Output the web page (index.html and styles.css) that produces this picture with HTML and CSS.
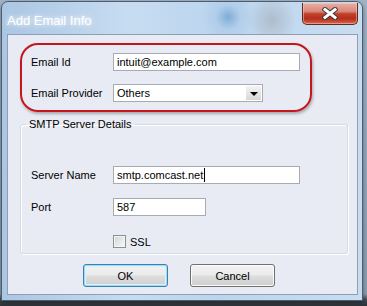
FILE: index.html
```html
<!DOCTYPE html>
<html lang="en">

<head>
    <meta charset="UTF-8">
    <meta name="viewport" content="width=device-width, initial-scale=1.0">
    <title>Add Email Info</title>
    <link rel="stylesheet" href="styles.css">
</head>

<body>
    <div class="window">
        <div class="titlebar">
            <span class="title">Add Email Info</span>
            <div class="close">
                <svg width="16" height="13" viewBox="0 0 16 13">
                    <line x1="3" y1="2.5" x2="13" y2="10.5" stroke="#3b3b3b" stroke-width="5" stroke-linecap="square" />
                    <line x1="13" y1="2.5" x2="3" y2="10.5" stroke="#3b3b3b" stroke-width="5" stroke-linecap="square" />
                    <line x1="3" y1="2.5" x2="13" y2="10.5" stroke="#fff" stroke-width="3" stroke-linecap="square" />
                    <line x1="13" y1="2.5" x2="3" y2="10.5" stroke="#fff" stroke-width="3" stroke-linecap="square" />
                </svg>
            </div>
        </div>

        <div class="client">
            <!-- обведено красным -->
            <div class="highlight">
                <div class="row">
                    <span class="label">Email Id</span>
                    <div class="field email">intuit@example.com</div>
                </div>
                <div class="row row-gap">
                    <span class="label">Email Provider</span>
                    <div class="field select">
                        <span class="select-value">Others</span>
                        <span class="select-arrow"></span>
                    </div>
                </div>
            </div>

            <fieldset class="group">
                <legend>SMTP Server Details</legend>
                <div class="row">
                    <span class="label">Server Name</span>
                    <div class="field server">smtp.comcast.net<span class="caret"></span></div>
                </div>
                <div class="row row-gap">
                    <span class="label">Port</span>
                    <div class="field port">587</div>
                </div>
                <div class="row ssl-row">
                    <span class="label"></span>
                    <span class="checkbox"></span>
                    <span class="ssl-text">SSL</span>
                </div>
            </fieldset>

            <div class="buttons">
                <div class="btn btn-default">OK</div>
                <div class="btn">Cancel</div>
            </div>
        </div>
    </div>
</body>

</html>
```

FILE: styles.css
```css
body {
    margin: 0;
    width: 367px;
    height: 306px;
    overflow: hidden;
    font-family: "Liberation Sans", Arial, sans-serif;
    font-size: 11px;
    color: #000;
    background: linear-gradient(to bottom, #9fb3c8 0%, #8a9db1 96%, #3f4750 98%, #2e343b 100%);
}

.window {
    margin: 1px 0 0 1px;
    width: 362px;
    height: 300px;
    box-sizing: border-box;
    border: 1px solid #4f5d6b;
    border-radius: 7px 7px 0 0;
    padding: 0 4px 0 5px;
    background:
        radial-gradient(circle at 226px 15px, #7eaed6 0, #b0cdea 12px, rgba(185, 210, 236, 0) 26px),
        radial-gradient(ellipse at 270px 18px, #aebdcc 0, rgba(190, 210, 230, 0) 24px),
        linear-gradient(to right, #abc6e3 0%, #c6dcf1 35%, #bcd5ee 60%, #c9ddf0 100%);
    box-shadow: 0 2px 4px rgba(0, 0, 0, 0.4);
}

.titlebar {
    display: flex;
    align-items: flex-start;
    height: 32px;
}

.title {
    padding-top: 11px;
    font-size: 13px;
    color: #fff;
    text-shadow: 0 0 4px rgba(255, 255, 255, 0.9), 0 0 8px rgba(255, 255, 255, 0.6);
}

.close {
    margin-left: auto;
    margin-top: 1px;
    width: 56px;
    height: 22px;
    box-sizing: border-box;
    border: 1px solid #5d2b24;
    border-top: none;
    border-radius: 0 0 5px 5px;
    background: linear-gradient(to bottom, #e9b0a3 0%, #d9887a 40%, #c0402c 52%, #b52f1b 75%, #d8674c 100%);
    box-shadow: inset 0 0 0 1px rgba(255, 220, 210, 0.45);
    display: flex;
    align-items: center;
    justify-content: center;
}

.client {
    height: 261px;
    box-sizing: border-box;
    border: 1px solid #8d9fb4;
    background-color: #e8ebf3;
    padding-top: 8px;
}

.highlight {
    margin-left: 12px;
    width: 292px;
    height: 69px;
    box-sizing: border-box;
    border: 2px solid #c4161c;
    border-radius: 18px;
    padding: 8px 0 0 9px;
    box-shadow: 1px 2px 3px rgba(0, 0, 0, 0.28);
}

.row {
    display: flex;
    align-items: center;
    height: 18px;
}

.row-gap {
    margin-top: 14px;
}

.highlight .row-gap {
    margin-top: 13px;
}

.label {
    width: 82px;
    flex-shrink: 0;
}

.field {
    height: 18px;
    box-sizing: border-box;
    border: 1px solid #a7acb3;
    background-color: #fff;
    padding-left: 3px;
    line-height: 16px;
    display: flex;
    align-items: center;
}

.email,
.server {
    width: 187px;
}

.port {
    width: 93px;
}

.select {
    width: 150px;
    padding-right: 1px;
}

.select-value {
    flex: 1;
}

.select-arrow {
    width: 15px;
    height: 14px;
    background: linear-gradient(to bottom, #f4f4f4 0%, #e6e6e6 50%, #d6d6d6 100%);
    display: flex;
    align-items: center;
    justify-content: center;
}

.select-arrow::after {
    content: "";
    border-left: 4px solid transparent;
    border-right: 4px solid transparent;
    border-top: 4px solid #000;
    margin-top: 1px;
}

.caret {
    width: 1px;
    height: 14px;
    margin-left: 1px;
    background-color: #000;
}

.group {
    margin: 5px 0 0 12px;
    width: 328px;
    box-sizing: border-box;
    padding: 35px 0 5px 10px;
    border: 1px solid #d4dbe3;
    border-radius: 3px;
    box-shadow: inset 1px 1px 0 #fff, 1px 1px 0 #fff;
    min-width: 0;
}

.group legend {
    margin-left: -5px;
    padding: 0 3px;
    line-height: 14px;
    font-size: 11px;
}

.ssl-row {
    margin-top: 19px;
    height: 13px;
}

.checkbox {
    width: 13px;
    height: 13px;
    box-sizing: border-box;
    border: 1px solid #8e8f8f;
    background: linear-gradient(135deg, #cfd1d4 0%, #e6e7e9 50%, #f7f7f8 100%);
    box-shadow: inset 0 0 0 1px #f4f4f4;
}

.ssl-text {
    margin-left: 4px;
}

.buttons {
    display: flex;
    gap: 22px;
    margin-top: 10px;
    padding-left: 75px;
}

.btn {
    width: 85px;
    height: 23px;
    box-sizing: border-box;
    border: 1px solid #707070;
    border-radius: 3px;
    background: linear-gradient(to bottom, #f2f2f2 0%, #ebebeb 48%, #dddddd 52%, #cfcfcf 100%);
    box-shadow: inset 0 0 0 1px #fbfbfb;
    display: flex;
    align-items: center;
    justify-content: center;
}

.btn-default {
    border-color: #3c7fb1;
    box-shadow: inset 0 0 0 1px #9fdcf6, inset 0 0 0 2px #d9f1fb;
}
```
